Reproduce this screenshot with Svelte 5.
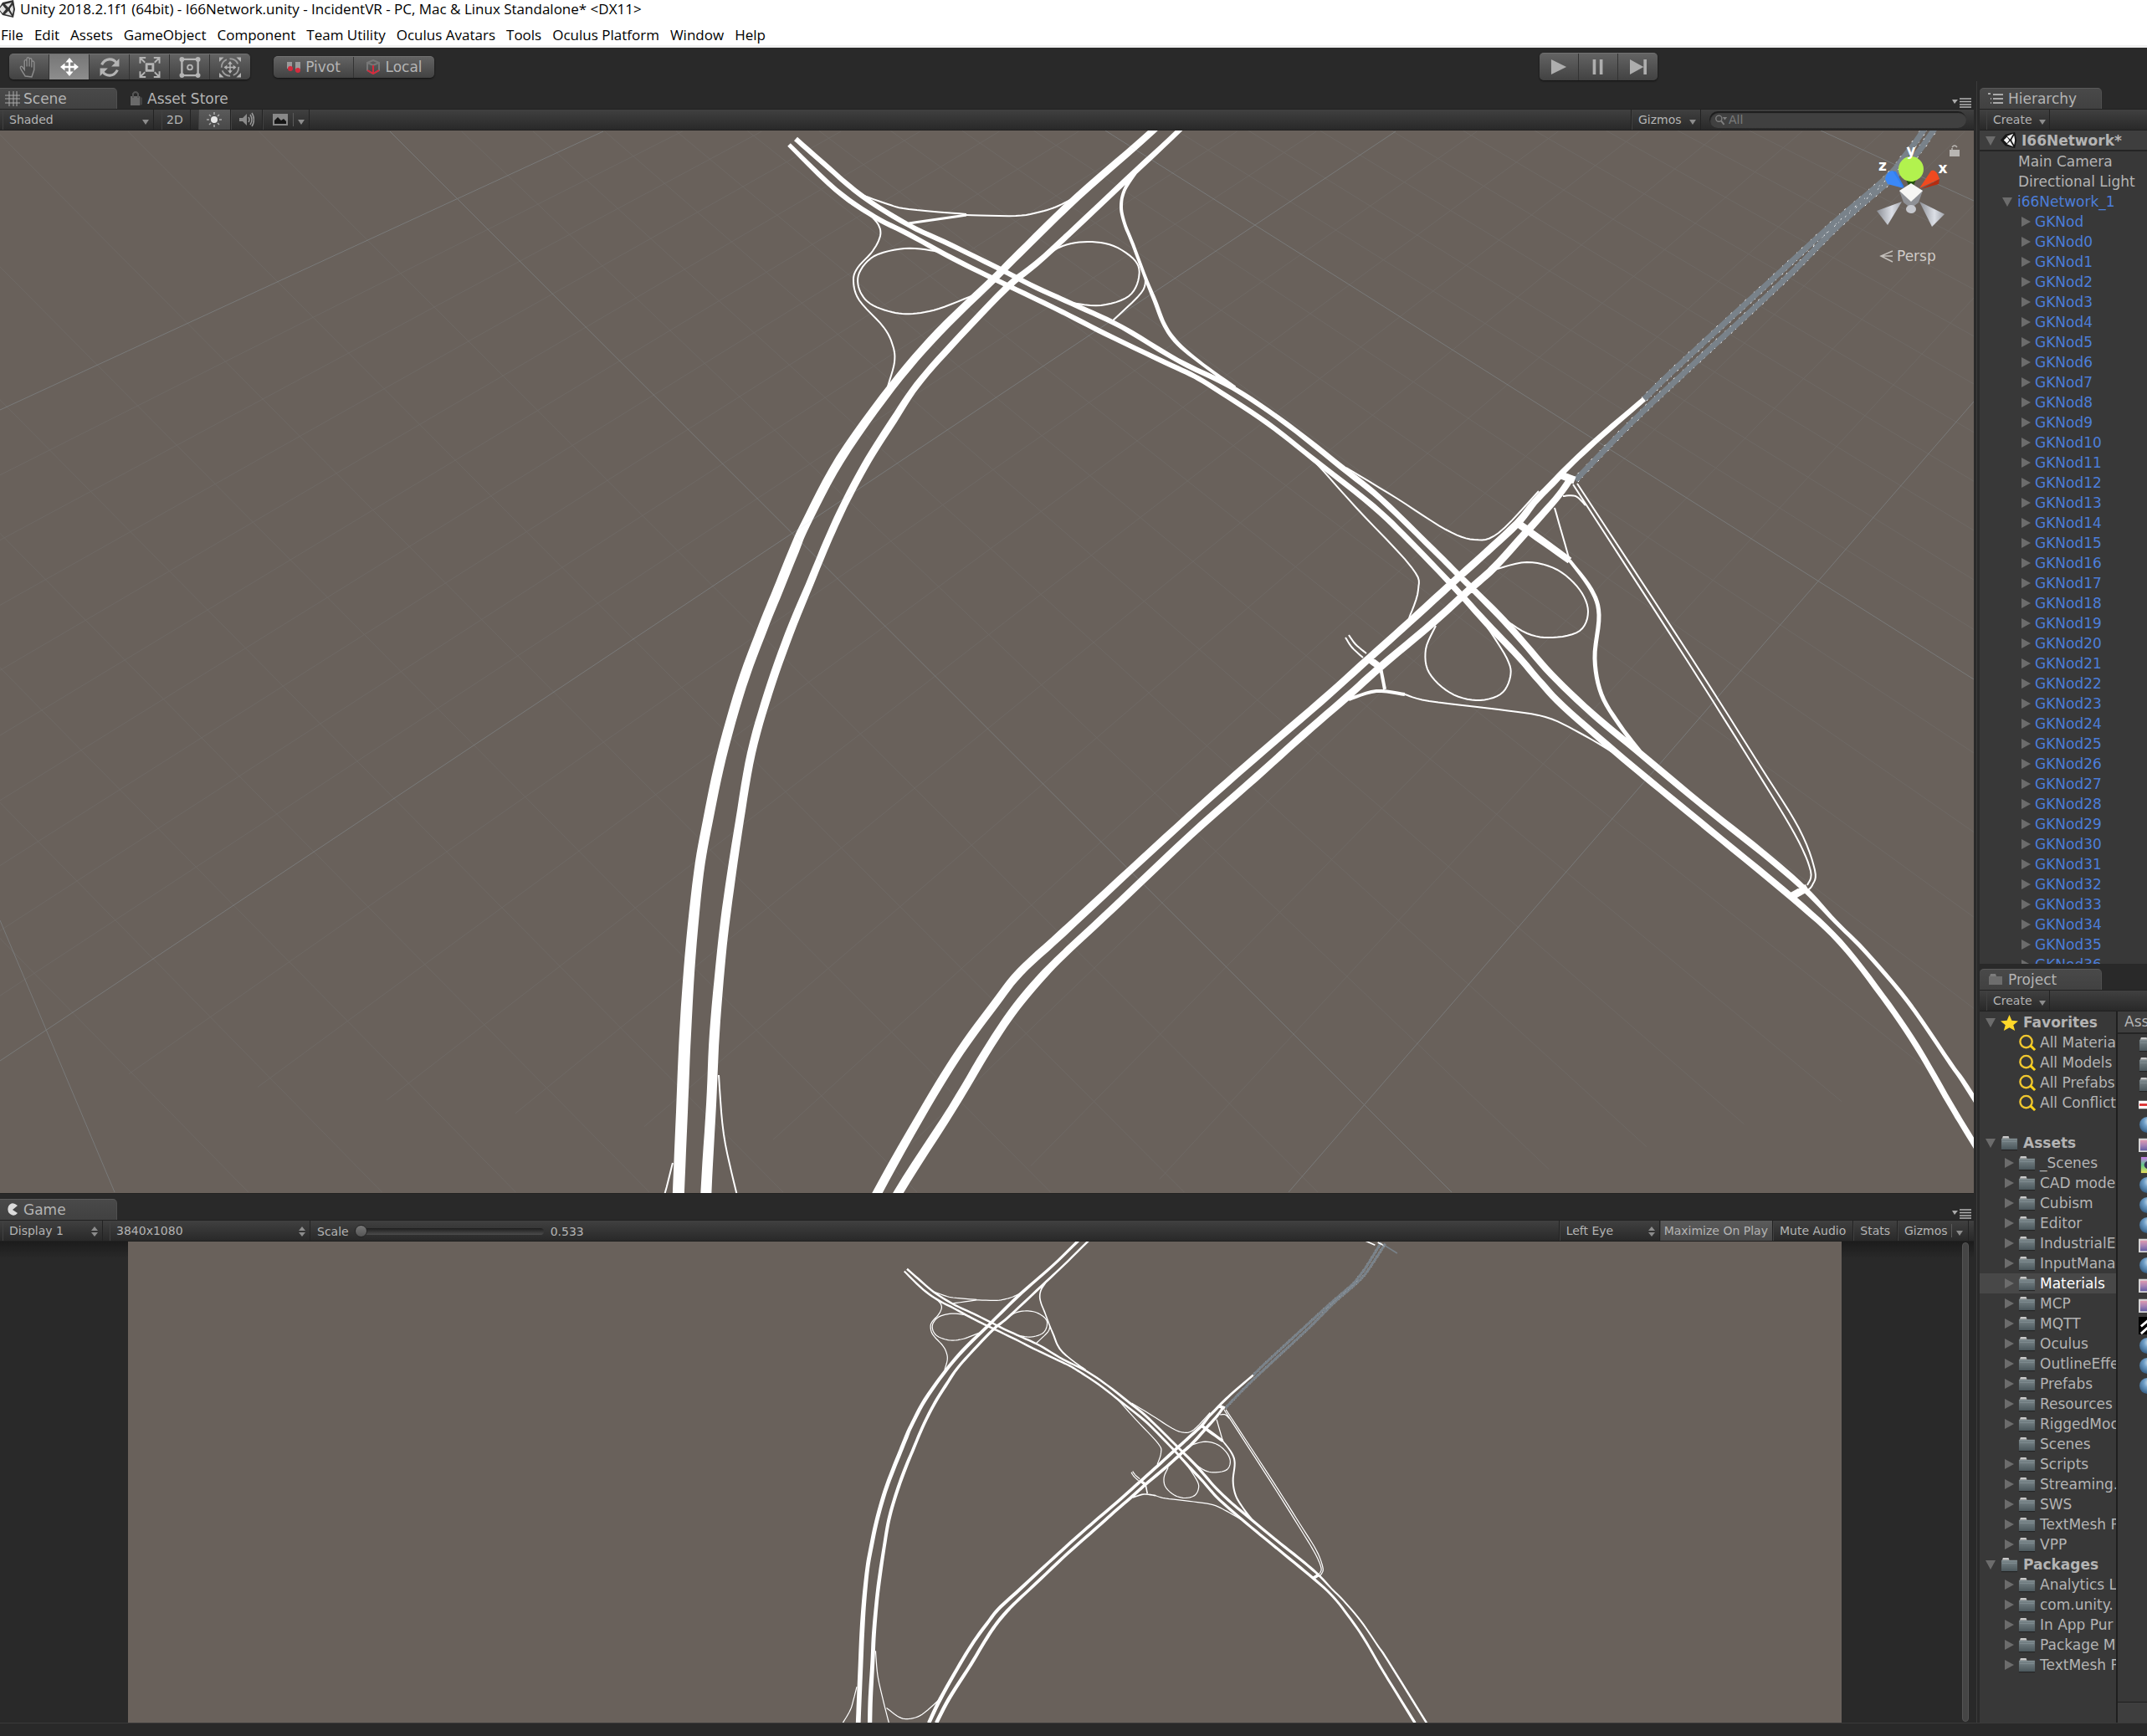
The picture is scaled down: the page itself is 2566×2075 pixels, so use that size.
<script>
  const menus = ['File', 'Edit', 'Assets', 'GameObject', 'Component', 'Team Utility', 'Oculus Avatars', 'Tools', 'Oculus Platform', 'Window', 'Help'];
  const nodes = ['GKNod', ...Array.from({ length: 37 }, (_, i) => 'GKNod' + i)];
  const favorites = ['All Materia', 'All Models', 'All Prefabs', 'All Conflict'];
  const folders = ['_Scenes', 'CAD mode', 'Cubism', 'Editor', 'IndustrialE', 'InputMana', 'Materials', 'MCP', 'MQTT', 'Oculus', 'OutlineEffe', 'Prefabs', 'Resources', 'RiggedMoc', 'Scenes', 'Scripts', 'Streaming.', 'SWS', 'TextMesh P', 'VPP'];
  const packages = ['Analytics L', 'com.unity.', 'In App Pur', 'Package M', 'TextMesh P'];
  const files = ['folder', 'folder', 'folder', 'line', 'ball', 'image', 'rainbow', 'ball', 'ball', 'ball', 'image', 'ball', 'image', 'image', 'stripes', 'ball', 'ball', 'ball'];

  // Every road is a list of x, y, width triples along its centre line.
  const highways = [
    [[1456,80,8],[1378,156,8],[1288,235,9],[1219,302,9],[1188,333,9],[1122,397,10],[1066,462,10],[1004,549,11],[963,626,11],[949,658,12],[930,705,12],[911,752,12],[886,820,12],[862,905,12],[846,981,12],[835,1044,12],[825,1142,13],[819,1235,14],[815,1329,14],[811,1423,14],[808,1500,14]],
    [[1486,80,6],[1409,156,6],[1346,215,7],[1249,306,7],[1203,344,8],[1137,413,8],[1096,460,8],[1068,502,9],[1038,549,9],[1012,597,9],[991,642,9],[971,690,9],[943,758,10],[918,829,10],[898,900,10],[884,981,10],[870,1075,11],[862,1142,11],[854,1235,12],[850,1320,12],[844,1423,13],[842,1500,13]],
    [[951,166,6],[984,195,6],[1030,234,6],[1086,269,6],[1137,293,6],[1196,322,6],[1239,344,6],[1290,367,6],[1341,391,6],[1408,431,6],[1474,464,6],[1538,507,6],[1604,559,7],[1650,596,7],[1713,657,7],[1742,686,7],[1791,735,8],[1820,767,8],[1854,806,8],[1902,852,8],[1956,897,8],[2033,961,8],[2106,1019,8],[2156,1062,7],[2194,1102,5],[2229,1137,5],[2280,1197,5],[2331,1271,5],[2360,1314,6],[2473,1496,6]],
    [[943,173,5],[999,227,6],[1045,259,6],[1086,280,6],[1137,308,6],[1183,331,6],[1206,342,6],[1270,373,6],[1321,399,6],[1392,433,6],[1428,450,6],[1459,469,6],[1515,506,6],[1570,549,6],[1641,605,7],[1684,646,7],[1736,700,7],[1776,744,8],[1815,785,8],[1839,813,8],[1868,844,8],[1931,899,8],[1985,944,8],[2057,1003,8],[2143,1074,8],[2199,1126,7],[2250,1191,7],[2291,1251,7],[2331,1320,7],[2360,1368,7],[2439,1496,8]],
    [[1965,477,6],[1907,527,7],[1871,561,7],[1859,574,8],[1834,600,8],[1813,626,9],[1771,665,9],[1742,691,9],[1684,744,9],[1636,787,9],[1578,839,9],[1500,906,9],[1433,965,9],[1352,1039,9],[1270,1115,10],[1219,1162,10],[1189,1200,10],[1148,1256,10],[1107,1322,10],[1049,1425,11],[1015,1496,11]],
    [[1876,574,8],[1859,597,8],[1825,635,9],[1786,678,9],[1757,704,9],[1713,744,9],[1650,797,9],[1611,832,9],[1558,878,9],[1500,930,9],[1423,998,9],[1331,1085,9],[1270,1142,9],[1240,1173,10],[1209,1211,10],[1178,1258,10],[1138,1325,10],[1074,1425,11],[1037,1496,11]],
    [[1863,567,9],[1882,574,9]],
    [[1815,626,9],[1830,637,9],[1876,670,8]],
    [[1634,786,8],[1650,798,8]],
    [[1650,798,4],[1655,824,4]],
    [[2140,1072,9],[2160,1061,9]],
    [[1086,267,3],[1155,257,3]],
    [[1359,203,5],[1344,227,4],[1340,247,4],[1344,267,4],[1354,292,4],[1369,332,4],[1380,359,5],[1392,389,5],[1408,411,5],[1438,436,4],[1476,463,4]],
    [[1876,670,4],[1902,705,5],[1911,735,5],[1906,787,5],[1914,830,5],[1936,867,5],[1963,902,5]],
    [[1612,836,4],[1645,826,4],[1679,830,4]],
  ];
  const ramps = [
    [[1030,233],[1061,244],[1086,250],[1155,256]],
    [[1155,257],[1214,258],[1244,253],[1265,246],[1288,234]],
    [[1040,257],[1050,269],[1052,282],[1043,300],[1025,320],[1020,336],[1027,359],[1056,391],[1067,413],[1069,433],[1061,462]],
    [[1137,306],[1117,300],[1081,297],[1045,306],[1027,326],[1027,346],[1040,363],[1066,373],[1091,375],[1122,369],[1163,353]],
    [[1247,308],[1270,294],[1300,289],[1331,294],[1357,312],[1361,332],[1349,354],[1316,365],[1280,362]],
    [[1369,332],[1364,350],[1328,385]],
    [[1570,551],[1578,559],[1621,607],[1687,678],[1695,705],[1684,739]],
    [[1609,559],[1670,596],[1728,633],[1762,645],[1791,637],[1839,587]],
    [[1786,681],[1825,672],[1861,681],[1888,705],[1898,731],[1888,754],[1856,762],[1825,757],[1791,735]],
    [[1716,748],[1704,776],[1708,804],[1733,828],[1764,837],[1793,830],[1805,809],[1801,787],[1775,746]],
    [[1858,607],[1876,670]],
    [[1679,830],[1708,838],[1791,848],[1847,857],[1888,876],[1929,900]],
    [[1612,759],[1620,770],[1633,781]],
    [[1608,762],[1616,774],[1629,786]],
    [[1885,578],[2022,787],[2102,913],[2150,990],[2169,1040],[2166,1058],[2158,1066]],
    [[1880,579],[2016,789],[2096,916],[2145,997],[2164,1041],[2160,1058]],
    [[1868,593],[1883,593],[1895,604]],
    [[859,1285],[865,1356],[880,1425],[898,1496]],
    [[804,1390],[795,1425],[785,1458],[763,1496]],
    [[891,1452],[928,1479],[958,1484],[995,1471],[1044,1429]],
  ];
  const farRoads = [
    [[1965,477],[2003,440],[2117,335],[2191,267],[2254,213],[2276,187],[2298,157],[2340,88]],
    [[1883,574],[1950,505],[2019,440],[2132,335],[2200,267],[2262,213],[2288,187],[2310,157],[2352,92]],
  ];

  function spline(p, steps = 6) {
    const out = [];
    for (let i = 0; i < p.length - 1; i++) {
      const a = p[i - 1] ?? p[i], b = p[i], c = p[i + 1], d = p[i + 2] ?? c;
      for (let s = 0; s < steps; s++) {
        const t = s / steps;
        out.push(b.map((_, k) => 0.5 * (2 * b[k] + (c[k] - a[k]) * t + (2 * a[k] - 5 * b[k] + 4 * c[k] - d[k]) * t * t + (3 * b[k] - a[k] - 3 * c[k] + d[k]) * t * t * t)));
      }
    }
    out.push(p[p.length - 1]);
    return out;
  }
  const fmt = (pts) => 'M' + pts.map((q) => q[0].toFixed(1) + ' ' + q[1].toFixed(1)).join('L');
  function ribbon(p) {
    const s = spline(p), left = [], right = [];
    s.forEach((q, i) => {
      const a = s[Math.max(0, i - 1)], b = s[Math.min(s.length - 1, i + 1)];
      const dx = b[0] - a[0], dy = b[1] - a[1], n = Math.hypot(dx, dy) || 1, h = q[2] / 2;
      left.push([q[0] - dy / n * h, q[1] + dx / n * h]);
      right.unshift([q[0] + dy / n * h, q[1] - dx / n * h]);
    });
    return fmt([...left, ...right]) + 'Z';
  }
  const highwayPath = highways.map(ribbon).join('');
  const rampPath = ramps.map((r) => fmt(spline(r))).join('');
  const farPath = farRoads.map((r) => fmt(spline(r))).join('');

  const major = [[0,1100,137,1425],[466,157,1735,1425],[1321,156,2359,812],[2176,156,2359,240],[0,490,721,157],[0,1268,1668,157],[1540,1425,2359,480]];
  const between = (a, b, n) => Array.from({ length: n - 1 }, (_, i) => a.map((v, k) => v + (b[k] - v) * (i + 1) / n));
  const minor = [...between([-1100,157,137,1425], major[1], 10), ...between(major[1], [1321,156,2900,1154], 10), ...between([1321,156,2359,812], [2176,156,2500,305], 10), ...between(major[4], major[5], 10), ...between([0,1268,1668,157], [1540,1425,2640,157], 10)];
  const lines = (l) => l.map((q) => `M${q[0]} ${q[1]}L${q[2]} ${q[3]}`).join('');

  let search = $state('');
  let scale = $state(0);
</script>

{#snippet down()}<svg class="caret" viewBox="0 0 8 6" aria-hidden="true"><path d="M0 0h8L4 6z" fill="#8c8c8c" /></svg>{/snippet}
{#snippet updown()}<svg class="updown" viewBox="0 0 8 14" aria-hidden="true"><path d="M0 6h8L4 1zM0 8h8l-4 5z" fill="#8c8c8c" /></svg>{/snippet}
{#snippet paneMenu()}<button class="panemenu" aria-label="Pane options"><svg viewBox="0 0 24 12"><path d="M0 2h7L3 7z" fill="#aaa" /><path d="M9 1h14M9 4.500h14M9 8h14M9 11h14" stroke="#b4b4b4" stroke-width="1.500" /></svg></button>{/snippet}
{#snippet arrow(open)}<svg class="arrow" viewBox="0 0 12 12" aria-hidden="true"><path d={open ? 'M0 1h12L6 12z' : 'M1 0l11 6-11 6z'} fill="#6c6c6c" /></svg>{/snippet}
{#snippet folder()}<svg class="ico" viewBox="0 0 22 20" aria-hidden="true"><path d="M2 4l1-3h7l1 3z" fill="#c9c9c9" /><path d="M1 4h20v14H1z" fill="url(#folderFill)" /><path d="M2 8h18M2 5h18" stroke="#8d999d" opacity=".6" /><path d="M1 18.500h20" stroke="#222" /></svg>{/snippet}
{#snippet lens()}<svg class="ico" viewBox="0 0 22 20" aria-hidden="true"><circle cx="10" cy="8.500" r="7.500" fill="none" stroke="#efc62f" stroke-width="2.500" /><path d="M15 13l6 6" stroke="#ffd21a" stroke-width="3" /></svg>{/snippet}
{#snippet unity()}<svg class="ico" viewBox="0 0 22 22" aria-hidden="true"><path d="M19 1L7 4 1 11l6 7 12 3 2-10z" fill="#161616" /><path d="M17 3l-8 3 4 4zM5 11l4-4 3 4-3 4zM17 19l-8-3 4-4zM18 5l-3 5v2l3 5 1-6z" fill="#f4f4f4" /></svg>{/snippet}
{#snippet network(thin)}
  <path d={farPath} fill="none" stroke="#79828a" stroke-width="7" />
  <path d={farPath} fill="none" stroke="#fff" stroke-width="1" stroke-dasharray="2 5 1 9" transform="translate(3 2)" />
  <path d={farPath} fill="none" stroke="#fff" stroke-width="1" stroke-dasharray="1 7 2 13" transform="translate(-3 -2)" />
  <path d="M2290 82l32 14M2330 88l20 10" stroke="#fff" stroke-width="4" />
  <path d="M2345 94l42 26" stroke="#79828a" stroke-width="4" />
  <path d={highwayPath} fill="#fff" />
  <path d={rampPath} fill="none" stroke="#fff" stroke-width={thin} />
{/snippet}

<div class="app">
  <svg class="defs" aria-hidden="true"><defs>
    <linearGradient id="folderFill" x1="0" y1="0" x2="0" y2="1"><stop offset="0" stop-color="#7b878b" /><stop offset="1" stop-color="#4b575c" /></linearGradient>
    <radialGradient id="ballFill" cx=".6" cy=".3" r=".8"><stop offset="0" stop-color="#dbe8f2" /><stop offset=".4" stop-color="#6f9fc8" /><stop offset="1" stop-color="#2b5278" /></radialGradient>
    <linearGradient id="imageFill" x1="0" y1="0" x2="0" y2="1"><stop offset="0" stop-color="#e99db0" /><stop offset=".5" stop-color="#a583b5" /><stop offset="1" stop-color="#5b57a0" /></linearGradient>
    <linearGradient id="rainbowFill" x1="0" y1="0" x2="0" y2="1"><stop offset="0" stop-color="#c77be8" /><stop offset=".5" stop-color="#63c98a" /><stop offset="1" stop-color="#e8df5c" /></linearGradient>
    <linearGradient id="coneFill"><stop offset="0" stop-color="#8c8f96" /><stop offset=".6" stop-color="#dcdfe6" /><stop offset="1" stop-color="#a2a5ac" /></linearGradient>
  </defs></svg>

  <header class="title">
    <svg class="logo" viewBox="0 0 18 22" aria-hidden="true"><path d="M-2 11l5-8 13-3 2 11-2 10-13-3z" fill="#333" /><path d="M14 3L6 5l4 4zM-1 11l4-5 4 5-4 5zM14 19l-8-2 4-4zM15 6l-3 4v2l3 5 1-6z" fill="#e4e4e4" /></svg>
    <h1>Unity 2018.2.1f1 (64bit) - I66Network.unity - IncidentVR - PC, Mac &amp; Linux Standalone* &lt;DX11&gt;</h1>
  </header>
  <nav class="menus">{#each menus as m}<button>{m}</button>{/each}</nav>

  <div class="tools">
    <div class="group transform">
      <button aria-label="Hand"><svg viewBox="0 0 24 26"><path d="M7 24l-5-8c-2-3-1-5 1-4l3 4V6c0-3 3-3 3 0v6-9c0-3 3-3 3 0v9V4c0-3 3-3 3 0v9-6c0-3 3-2 3 0v9l-2 6-1 3z" fill="#484848" stroke="#8d8d8d" stroke-width="1.500" /></svg></button>
      <button class="on" aria-label="Move"><svg viewBox="0 0 24 24"><path d="M12 3v18M3 12h18" stroke="#fff" stroke-width="2.500" /><path d="M12 0l5 6H7zM12 24l5-6H7zM0 12l6-5v10zM24 12l-6-5v10z" fill="#fff" /></svg></button>
      <button aria-label="Rotate"><svg viewBox="0 0 24 24"><path d="M3 9c4-8 13-8 17-2M21 15c-4 8-13 8-17 2" fill="none" stroke="#b4b4b4" stroke-width="3" /><path d="M23 2v9h-9zM1 22v-9h9z" fill="#b4b4b4" /></svg></button>
      <button aria-label="Scale"><svg viewBox="0 0 26 26"><path d="M9 9h8v8H9z" fill="none" stroke="#b4b4b4" stroke-width="3" /><path d="M1 8V1h7M18 1h7v7M25 18v7h-7M8 25H1v-7M1 1l6 6M25 1l-6 6M25 25l-6-6M1 25l6-6" fill="none" stroke="#b4b4b4" stroke-width="2" /></svg></button>
      <button aria-label="Rect"><svg viewBox="0 0 26 26"><path d="M3 3h20v20H3z" fill="none" stroke="#b4b4b4" stroke-width="2.500" /><g fill="#b4b4b4"><circle cx="3" cy="3" r="3" /><circle cx="23" cy="3" r="3" /><circle cx="3" cy="23" r="3" /><circle cx="23" cy="23" r="3" /></g><circle cx="13" cy="13" r="3" fill="none" stroke="#b4b4b4" stroke-width="2" /></svg></button>
      <button aria-label="Transform"><svg viewBox="0 0 28 26"><path d="M0 0h6L0 6zM28 0h-6l6 6zM0 26h6l-6-6zM28 26h-6l6-6z" fill="#b4b4b4" /><circle cx="14" cy="13" r="11" fill="none" stroke="#9c9c9c" stroke-width="2" stroke-dasharray="13 4" /><path d="M14 6v14M7 13h14" stroke="#b4b4b4" stroke-width="1.500" /><path d="M14 5l3 4h-6zM14 21l3-4h-6zM6 13l4-3v6zM22 13l-4-3v6z" fill="#b4b4b4" /></svg></button>
    </div>
    <div class="group handles">
      <button><svg viewBox="0 0 18 14" aria-hidden="true"><path d="M1 1h6v8H1zM11 1h6v11h-6z" fill="#9a9a9a" /><circle cx="5" cy="9" r="3" fill="#d42a3c" /><circle cx="14" cy="11" r="3" fill="#d42a3c" /></svg>Pivot</button>
      <button><svg viewBox="0 0 18 18" aria-hidden="true"><path d="M9 1l7 3v9l-7 4-7-4V4zM2 4l7 3 7-3" fill="none" stroke="#777" stroke-width="2" /><path d="M9 7v9M2 13l7 4 7-4" fill="none" stroke="#d42a3c" stroke-width="2" /></svg>Local</button>
    </div>
    <div class="group play">
      <button aria-label="Play"><svg viewBox="0 0 22 22"><path d="M1 1l20 10L1 21z" fill="#aeaeae" /></svg></button>
      <button aria-label="Pause"><svg viewBox="0 0 22 22"><path d="M4 1h4v20H4zM13 1h4v20h-4z" fill="#aeaeae" /></svg></button>
      <button aria-label="Step"><svg viewBox="0 0 22 22"><path d="M0 1l18 10L0 21zM18 1h4v20h-4z" fill="#aeaeae" /></svg></button>
    </div>
  </div>

  <main>
    <div class="left">
      <div class="tabs">
        <button class="tab on"><svg viewBox="0 0 18 18" aria-hidden="true"><path d="M5 0v18M10 0v18M14 0v18M0 5h18M0 9h18M0 14h18" stroke="#aaa" stroke-width="1" /></svg>Scene</button>
        <button class="tab store"><svg viewBox="0 0 18 18" aria-hidden="true"><path d="M2 6h11v11H2z" fill="#6a6a6a" /><path d="M13 6l3 2v8l-3 1z" fill="#444" /><path d="M5 8V3q3-4 6 0v5" fill="none" stroke="#555" stroke-width="2" /></svg>Asset Store</button>
        <span class="grow"></span>{@render paneMenu()}
      </div>
      <div class="bar">
        <label class="cell shaded"><select aria-label="Draw mode"><option>Shaded</option></select>{@render down()}</label>
        <button class="cell twod">2D</button>
        <button class="cell lit on" aria-label="Lighting"><svg viewBox="0 0 18 18"><circle cx="9" cy="9" r="4" fill="#e6e6e6" /><path d="M9 0v3M9 15v3M0 9h3M15 9h3M3 3l2 2M13 13l2 2M15 3l-2 2M3 15l2-2" stroke="#aaa" stroke-width="1.500" /></svg></button>
        <button class="cell sound" aria-label="Audio"><svg viewBox="0 0 18 18"><path d="M0 7h4l5-5v14l-5-5H0z" fill="#8a8a8a" /><path d="M11 6q2 3 0 6M13 3q4 6 0 12M15 1q5 8 0 16" fill="none" stroke="#999" stroke-width="1.500" /></svg></button>
        <button class="cell fx" aria-label="Effects"><svg viewBox="0 0 18 14"><path d="M0 0h18v14H0z" fill="#888" /><path d="M2 12V8l4-4 4 4 3-2 3 3v3z" fill="#151515" /></svg><i></i>{@render down()}</button>
        <span class="grow"></span>
        <button class="cell gizmos">Gizmos{@render down()}</button>
        <label class="search"><svg viewBox="0 0 18 14" aria-hidden="true"><circle cx="6" cy="5" r="4" fill="none" stroke="#808080" stroke-width="1.500" /><path d="M9 8l4 5" stroke="#808080" stroke-width="2" /><path d="M11 3h6l-3 4z" fill="#808080" /></svg><input type="text" placeholder="All" aria-label="Search scene" bind:value={search} /></label>
      </div>
      <section class="scene" aria-label="Scene view">
        <svg viewBox="0 156 2359 1270" preserveAspectRatio="xMaxYMin slice">
          <rect y="156" width="2359" height="1270" fill="#69615b" />
          <path d={lines(minor)} stroke="#8a9296" stroke-width="1" opacity=".16" />
          <path d={lines(major)} stroke="#8a9599" stroke-width="1" opacity=".35" />
          {@render network(2)}
          <path d={lines(major)} stroke="#a8b8c8" stroke-width="1" opacity=".1" />
          <g class="gizmo">
            <path d="M2254 214q4-12 12-9l10 19z" fill="#2f7df0" /><path d="M2253 214q2-10 9-10l13 21-19-5z" fill="#3b88f6" />
            <path d="M2318 214q-4-13-10-10l-14 21z" fill="#f04a20" /><path d="M2318 214l-1 6-21 6z" fill="#b52c10" />
            <path d="M2277 212h14l-7 17z" fill="#26520f" /><circle cx="2284" cy="202" r="15" fill="#b2f24e" />
            <path d="M2270 228l14-7 14 7-5 14-9 7-9-7z" fill="#8f9196" /><path d="M2284 219l14 9-14 13-14-13z" fill="#f6f6f4" />
            <ellipse cx="2284" cy="250" rx="6" ry="5" fill="#c6c8ce" />
            <path d="M2273 241l-30 11 13 17z" fill="url(#coneFill)" /><path d="M2294 241l30 15-15 15z" fill="url(#coneFill)" />
            <text x="2284" y="186">y</text><text x="2250" y="204">z</text><text x="2322" y="207">x</text>
            <path d="M2330 179h12v8h-12z" fill="#b8b5b2" /><path d="M2333 180v-3m0-1q3-4 6 0" fill="none" stroke="#b8b5b2" stroke-width="1.500" />
            <path d="M2262 300l-14 6 14 7M2248 306h14" fill="none" stroke="#c4c0bc" stroke-width="1.500" />
            <text class="persp" x="2267" y="312">Persp</text>
          </g>
        </svg>
      </section>

      <div class="tabs lower">
        <button class="tab on"><svg viewBox="0 0 18 18" aria-hidden="true"><path d="M15 4q-7-6-11 1-2 6 2 9 5 4 9-1l-6-4z" fill="#dcdcdc" /></svg>Game</button>
        <span class="grow"></span>{@render paneMenu()}
      </div>
      <div class="bar">
        <label class="cell display"><select aria-label="Display"><option>Display 1</option></select>{@render updown()}</label>
        <label class="cell size"><select aria-label="Resolution"><option>3840x1080</option></select>{@render updown()}</label>
        <label class="scale">Scale<input type="range" min="0" max="5" bind:value={scale} /></label><output>0.533</output>
        <span class="grow"></span>
        <label class="cell eye"><select aria-label="Eye"><option>Left Eye</option></select>{@render updown()}</label>
        <button class="cell max on">Maximize On Play</button>
        <button class="cell">Mute Audio</button>
        <button class="cell">Stats</button>
        <button class="cell ggiz">Gizmos<i></i>{@render down()}</button>
      </div>
      <section class="game" aria-label="Game view">
        <svg viewBox="153 1484 2048 575" preserveAspectRatio="xMidYMin slice"><rect x="153" y="1484" width="2048" height="575" fill="#69615b" /><g transform="translate(696 1449) scale(.408)">{@render network(3)}</g></svg>
        <div class="thumb"></div>
      </section>
    </div>

    <aside>
      <section class="hierarchy">
        <div class="tabs"><button class="tab on"><svg viewBox="0 0 18 18" aria-hidden="true"><path d="M0 3h3M6 4h12M6 9h12M6 14h12M3 9h1M3 14h1" stroke="#aaa" stroke-width="2" /></svg>Hierarchy</button></div>
        <div class="bar"><button class="cell create">Create{@render down()}</button></div>
        <div class="tree">
          <button class="row head">{@render arrow(true)}{@render unity()}I66Network*</button>
          <button class="row leaf">Main Camera</button>
          <button class="row leaf">Directional Light</button>
          <button class="row d1 blue">{@render arrow(true)}i66Network_1</button>
          {#each nodes as n}<button class="row d2 blue">{@render arrow(false)}{n}</button>{/each}
        </div>
      </section>
      <section class="project">
        <div class="tabs"><button class="tab on"><svg viewBox="0 0 18 18" aria-hidden="true"><path d="M1 5h16v10H1z" fill="#6d6d6d" /><path d="M2 5l1-3h6l1 3z" fill="#7d7d7d" /></svg>Project</button></div>
        <div class="bar"><button class="cell create">Create{@render down()}</button></div>
        <div class="split">
          <div class="tree">
            <button class="row bold">{@render arrow(true)}<svg class="ico" viewBox="0 0 22 20" aria-hidden="true"><path d="M11 0l3 7 8 1-6 5 2 7-7-4-7 4 2-7-6-5 8-1z" fill="#ffd82a" /></svg>Favorites</button>
            {#each favorites as f}<button class="row fav">{@render lens()}{f}</button>{/each}
            <div class="row"></div>
            <button class="row bold">{@render arrow(true)}{@render folder()}Assets</button>
            {#each folders as f}<button class={['row', 'dir', f === 'Materials' && 'sel', f === 'Scenes' && 'closed']}>{@render arrow(false)}{@render folder()}{f}</button>{/each}
            <button class="row bold">{@render arrow(true)}{@render folder()}Packages</button>
            {#each packages as f}<button class="row dir">{@render arrow(false)}{@render folder()}{f}</button>{/each}
          </div>
          <div class="files">
            <div class="crumb">Ass</div>
            <div class="list">
              {#each files as kind}
                <div class="file">
                  {#if kind === 'folder'}{@render folder()}
                  {:else}<svg class="ico" viewBox="0 0 22 22" aria-hidden="true">
                    {#if kind === 'ball'}<circle cx="11" cy="11" r="10" fill="url(#ballFill)" />
                    {:else if kind === 'image'}<path d="M1 4h20v15H1z" fill="url(#imageFill)" stroke="#d8d8d8" stroke-width="2" />
                    {:else if kind === 'rainbow'}<path d="M3 1h18v20H3z" fill="url(#rainbowFill)" /><circle cx="12" cy="11" r="5" fill="#335" />
                    {:else if kind === 'line'}<path d="M0 6h22v10H0z" fill="#fff" /><path d="M1 11h20" stroke="#d33" stroke-width="3" />
                    {:else}<path d="M0 0h22v22H0z" fill="#000" /><path d="M3 12L16 1M3 21L22 4" stroke="#fff" stroke-width="3" />{/if}
                  </svg>{/if}
                </div>
              {/each}
            </div>
            <div class="filefoot"></div>
          </div>
        </div>
      </section>
    </aside>
  </main>
  <footer></footer>
</div>

<style>
  :global(body) { background: #292929; }
  .app { display: flex; flex-direction: column; height: 100vh; overflow: hidden; background: #292929; color: #b4b4b4; font-family: "DejaVu Sans", sans-serif; font-size: 17px; }
  .defs { position: absolute; width: 0; height: 0; }
  button, select, input { font: inherit; color: inherit; background: none; border: 0; padding: 0; margin: 0; appearance: none; outline: 0; }
  svg { display: block; flex: none; }
  .grow { flex: 1; }
  .title { display: flex; align-items: center; gap: 6px; height: 22px; flex: none; background: #fff; color: #000; font-family: "Open Sans", sans-serif; }
  .title h1 { margin: 0; font-size: 17px; font-weight: 400; line-height: 22px; white-space: nowrap; }
  .logo { width: 18px; height: 22px; }
  .menus { display: flex; gap: 13px; height: 32px; padding: 0 1px; background: #fff; border-bottom: 3px solid #f0f0f0; color: #000; font-family: "Open Sans", sans-serif; font-size: 17px; line-height: 30px; flex: none; }
  .menus button { height: 30px; white-space: nowrap; margin-top: 5px; }
  .tools { display: flex; align-items: center; height: 40px; padding: 5px 0 0 11px; flex: none; box-sizing: border-box; }
  .group { display: flex; border-radius: 5px; overflow: hidden; box-shadow: 0 1px 2px #111; background: linear-gradient(#636363, #424242); border-top: 1px solid #707070; }
  .group button { display: flex; align-items: center; justify-content: center; border-right: 1px solid #333; }
  .group button:last-child { border-right: 0; }
  .transform button { width: 48px; height: 30px; }
  .transform svg { width: 26px; height: 25px; }
  .transform button.on { background: linear-gradient(#777, #8d8d8d); }
  .transform button.on svg { height: 22px; }
  .handles { margin-left: 28px; }
  .handles button { width: 96px; height: 25px; gap: 5px; }
  .handles svg { width: 18px; height: 18px; }
  .play { margin-left: auto; margin-right: 585px; }
  .play button { width: 47px; height: 32px; }
  .play svg { width: 20px; height: 20px; }
  main { display: flex; flex: 1; min-height: 0; }
  .left { display: flex; flex-direction: column; flex: 1; min-width: 0; }
  aside { display: flex; flex-direction: column; width: 200px; margin-left: 3px; padding-left: 3px; border-left: 1px solid #3c3c3c; overflow: hidden; }
  .tabs { display: flex; align-items: flex-end; height: 33px; flex: none; }
  .tabs.lower { height: 32px; border-top: 1px solid #222; box-sizing: border-box; }
  .tab { display: flex; align-items: center; gap: 4px; height: 25px; padding-left: 6px; white-space: nowrap; }
  .tab.on { width: 140px; background: linear-gradient(#494949, #414141); border-top: 1px solid #5a5a5a; border-right: 1px solid #505050; border-radius: 0 5px 0 0; box-sizing: border-box; }
  .tab svg { width: 18px; height: 18px; }
  .store { margin-left: 8px; }
  .panemenu { width: 24px; margin: 0 2px 1px 0; }
  .panemenu svg { width: 24px; height: 12px; }
  .bar { display: flex; height: 26px; flex: none; background: linear-gradient(#404040, #292929); border-top: 1px solid #222; border-bottom: 1px solid #202020; box-sizing: border-box; font-size: 14px; line-height: 20px; padding-left: 3px; }
  .cell { display: flex; align-items: center; justify-content: space-between; padding: 0 8px; border-right: 1px solid #232323; box-shadow: inset 1px 0 #414141; white-space: nowrap; box-sizing: border-box; }
  .cell.on { background: linear-gradient(#5b5b5b, #484848); }
  .cell select { flex: 1; min-width: 0; line-height: 22px; }
  .caret { width: 8px; height: 6px; margin-top: 5px; }
  .updown { width: 8px; height: 14px; margin-top: 2px; }
  .cell i { width: 1px; height: 16px; background: #5a5a5a; }
  .shaded { width: 181px; padding-right: 5px; }
  .twod { width: 35px; margin-left: 9px; padding: 0 6px; }
  .lit { width: 39px; margin-left: 9px; justify-content: center; }
  .sound { width: 38px; justify-content: center; }
  .fx { width: 56px; padding: 0 5px 0 12px; }
  .lit svg, .sound svg, .fx svg:first-child { width: 18px; height: 18px; }
  .fx svg:first-child { height: 14px; }
  .gizmos { width: 84px; border-left: 1px solid #232323; padding: 0 5px 0 8px; }
  .search { display: flex; align-items: center; gap: 1px; width: 307px; height: 20px; margin: 2px 9px 0 10px; padding-left: 6px; box-sizing: border-box; border-radius: 10px; background: #404040; box-shadow: inset 1px 2px 1px #1d1d1d; }
  .search svg { width: 16px; height: 13px; }
  .search input { flex: 1; min-width: 0; }
  .search input::placeholder { color: #7c7c7c; opacity: 1; }
  .scene { flex: 1270 1 0; min-height: 0; }
  .scene svg, .game svg { width: 100%; height: 100%; }
  .gizmo text { fill: #fff; font-size: 17px; font-weight: 700; text-anchor: middle; }
  .gizmo text.persp { fill: #d0ccc8; font-size: 17px; font-weight: 400; text-anchor: start; }
  .display { width: 120px; padding-right: 5px; }
  .size { width: 240px; margin-left: 8px; padding-right: 5px; }
  .scale { display: flex; align-items: center; gap: 7px; margin-left: 8px; padding-top: 2px; }
  .scale input { width: 226px; height: 18px; }
  .scale input::-webkit-slider-runnable-track { height: 8px; border-radius: 4px; background: linear-gradient(#1f1f1f, #4c4c4c); }
  .scale input::-webkit-slider-thumb { appearance: none; width: 15px; height: 15px; margin-top: -4px; border-radius: 50%; background: linear-gradient(#777, #555); border: 1px solid #222; }
  output { margin-left: 8px; padding-top: 2px; line-height: 22px; }
  .eye { width: 121px; border-left: 1px solid #232323; padding-right: 5px; }
  .max { padding: 0 5px; }
  .ggiz { width: 85px; padding: 0 6px 0 8px; margin-right: 6px; }
  .game { display: flex; flex: 575 1 0; min-height: 0; padding-left: 153px; background: linear-gradient(#1c1c1c, #292929 20px); }
  .game svg { flex: 1; min-width: 0; }
  .thumb { width: 6px; margin: 1px 6px 1px 144px; border: 1px solid #555; border-radius: 4px; background: #454545; flex: none; }
  .hierarchy { display: flex; flex-direction: column; flex: 1055 1 0; min-height: 0; }
  .project { display: flex; flex-direction: column; flex: 907 1 0; min-height: 0; }
  .project .tabs { height: 31px; }
  aside .tab { gap: 6px; }
  aside .tab.on { width: 146px; padding-left: 10px; border-radius: 5px 5px 0 0; }
  aside .bar { padding-left: 8px; }
  .create { width: 76px; padding: 0 4px 0 8px; }
  .tree { flex: 1; min-height: 0; min-width: 0; overflow: hidden; background: #383838; }
  .row { display: flex; align-items: center; gap: 6px; width: 100%; height: 24px; padding-left: 7px; white-space: nowrap; box-sizing: border-box; overflow: hidden; }
  .row.head { height: 25px; background: #3e3e3e; border-bottom: 2px solid #242424; font-weight: 700; gap: 5px; }
  .row.bold { font-weight: 700; }
  .row.leaf { padding-left: 46px; }
  .row.d1 { padding-left: 27px; }
  .row.d2 { padding-left: 49px; gap: 5px; }
  .row.fav { padding-left: 46px; gap: 5px; }
  .row.dir { padding-left: 29px; gap: 5px; }
  .row.sel { background: #484848; color: #fff; }
  .row.closed .arrow { visibility: hidden; }
  .blue { color: #4c7eda; }
  .arrow { width: 12px; height: 12px; }
  .ico { width: 21px; height: 21px; }
  .split { display: flex; flex: 1; min-height: 0; }
  .split .tree { flex: 0 0 163px; border-right: 2px solid #1f1f1f; padding-top: 1px; }
  .files { display: flex; flex-direction: column; flex: 1; min-width: 0; overflow: hidden; background: #383838; }
  .crumb { height: 25px; padding-left: 8px; line-height: 25px; background: #3e3e3e; border-bottom: 2px solid #242424; flex: none; }
  .list { flex: 1; min-height: 0; overflow: hidden; }
  .file { display: flex; align-items: center; height: 24px; padding-left: 25px; }
  .filefoot { height: 24px; background: #3e3e3e; border-top: 1px solid #1f1f1f; flex: none; }
  footer { height: 16px; border-top: 1px solid #3a3a3a; box-sizing: border-box; flex: none; }
</style>
